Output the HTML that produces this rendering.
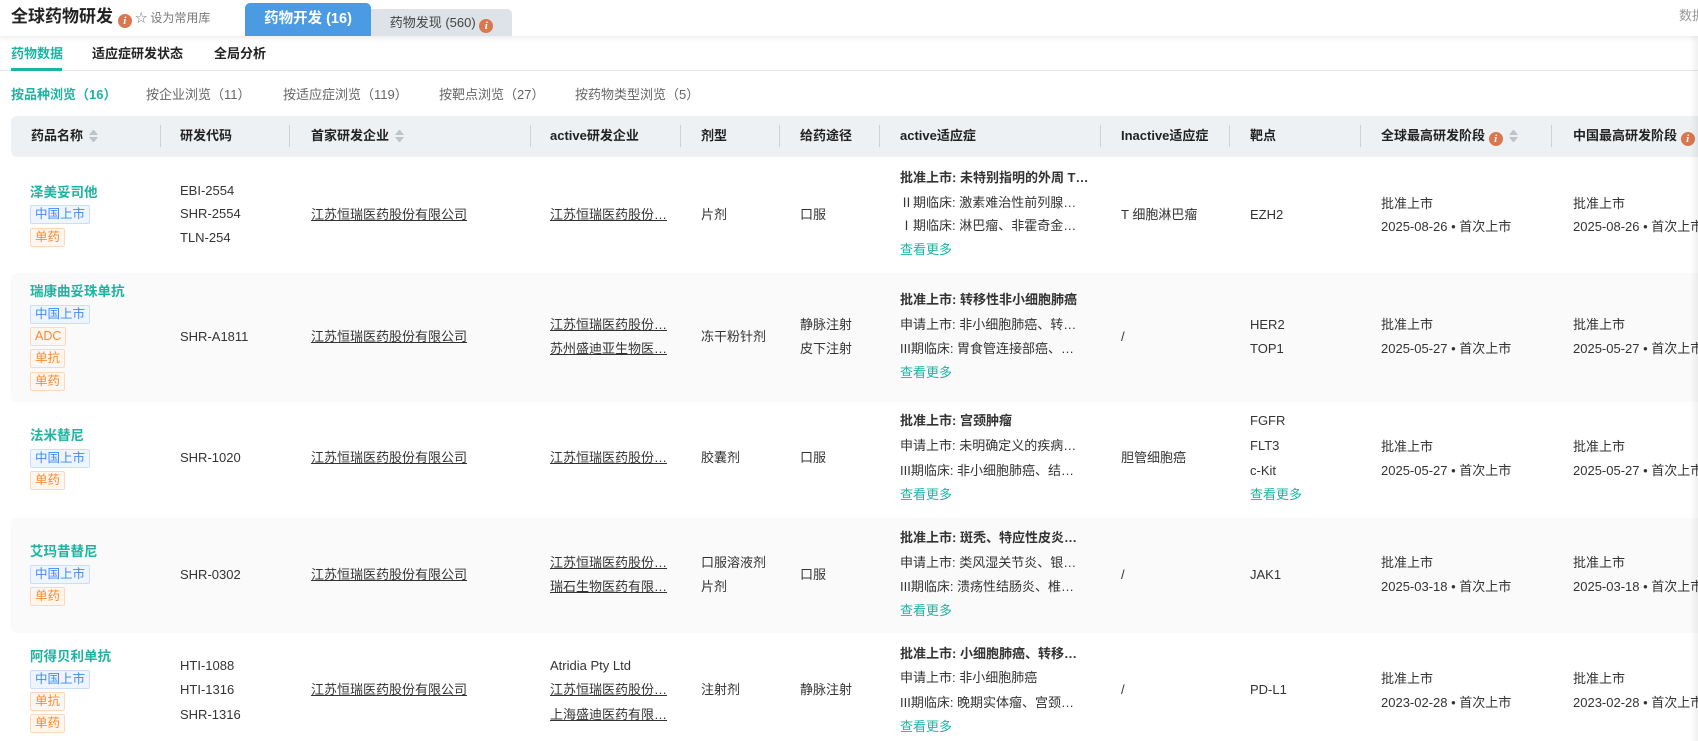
<!DOCTYPE html>
<html><head><meta charset="utf-8"><style>
*{margin:0;padding:0;box-sizing:border-box}
body{width:1698px;height:741px;overflow:hidden;background:#fff;position:relative;font-family:"Liberation Sans","Noto Sans CJK SC",sans-serif;font-size:13px;color:#333}
.a{position:absolute;white-space:nowrap;line-height:20px}
.b{font-weight:bold}
.n{color:#1fb3a2;font-weight:bold;font-size:13.5px}
.u{text-decoration:underline;color:#333}
.m{color:#1fb3a2}
.tag{position:absolute;height:19px;line-height:17px;font-size:12.5px;padding:0 4px;border:1px solid;border-radius:2px}
.cn{color:#3d8bf5;border-color:#c9defc;background:#eef5ff}
.or{color:#f98a32;border-color:#fcd9bd;background:#fff6ef}
.sep{position:absolute;top:125px;width:1px;height:22px;background:#ccd2d6}
.hd{position:absolute;top:126px;line-height:20px;font-weight:bold;color:#222;white-space:nowrap;font-size:13px}
.i{display:inline-block;width:14px;height:14px;border-radius:50%;background:#d9774f;color:#fff;font-size:11px;line-height:14px;text-align:center;font-weight:bold;font-style:italic;vertical-align:-2px;font-family:"Liberation Serif",serif}
.srt{display:inline-block;width:9px;vertical-align:-2px;margin-left:6px}
.srt:before{content:"";display:block;border:4px solid transparent;border-bottom:5px solid #bcc3c9;border-top:0;margin-bottom:2px}
.srt:after{content:"";display:block;border:4px solid transparent;border-top:5px solid #bcc3c9;border-bottom:0}
.rowbg{position:absolute;left:11px;width:1700px;background:#fafafa;border-radius:6px 0 0 6px}
</style></head><body>
<div style="position:absolute;left:0;top:0;width:1698px;height:36px;background:#fff;box-shadow:0 2px 5px rgba(0,0,0,.08)"></div>
<div class="a" style="left:11px;top:5px;font-size:17px;font-weight:bold;line-height:24px;color:#222">全球药物研发 <span class="i">i</span><span style="font-size:12px;color:#777;font-weight:normal"> ☆ 设为常用库</span></div>
<div style="position:absolute;left:245px;top:3px;width:126px;height:33px;background:#4a9be3;border-radius:5px 5px 0 0;color:#fff;font-weight:bold;font-size:14.5px;text-align:center;line-height:33px">药物开发 (16)</div>
<div style="position:absolute;left:371px;top:9px;width:141px;height:27px;background:#dde3e8;border-radius:0 5px 0 0;color:#444;font-size:13px;text-align:center;line-height:27px">药物发现 (560) <span class="i">i</span></div>
<div class="a" style="left:1679px;top:6px;color:#999;font-size:13px">数据</div>
<div class="a b" style="left:11px;top:44px;color:#1fb3a2">药物数据</div>
<div class="a b" style="left:92px;top:44px;color:#222">适应症研发状态</div>
<div class="a b" style="left:214px;top:44px;color:#222">全局分析</div>
<div style="position:absolute;left:0;top:70px;width:1698px;height:1px;background:#e4e7ea"></div>
<div style="position:absolute;left:11px;top:68px;width:51px;height:3px;background:#1fb3a2"></div>
<div class="a b" style="left:11px;top:85px;color:#1fb3a2">按品种浏览（16）</div>
<div class="a" style="left:146px;top:85px;color:#666">按企业浏览（11）</div>
<div class="a" style="left:283px;top:85px;color:#666">按适应症浏览（119）</div>
<div class="a" style="left:439px;top:85px;color:#666">按靶点浏览（27）</div>
<div class="a" style="left:575px;top:85px;color:#666">按药物类型浏览（5）</div>

<div style="position:absolute;left:11px;top:116px;width:1700px;height:41px;background:#eef1f3;border-radius:6px 0 0 6px"></div>
<div class="hd" style="left:31px">药品名称<span class="srt"></span></div>
<div class="sep" style="left:160px"></div><div class="hd" style="left:180px">研发代码</div>
<div class="sep" style="left:289px"></div><div class="hd" style="left:311px">首家研发企业<span class="srt"></span></div>
<div class="sep" style="left:530px"></div><div class="hd" style="left:550px">active研发企业</div>
<div class="sep" style="left:680px"></div><div class="hd" style="left:701px">剂型</div>
<div class="sep" style="left:779px"></div><div class="hd" style="left:800px">给药途径</div>
<div class="sep" style="left:879px"></div><div class="hd" style="left:900px">active适应症</div>
<div class="sep" style="left:1100px"></div><div class="hd" style="left:1121px">Inactive适应症</div>
<div class="sep" style="left:1229px"></div><div class="hd" style="left:1250px">靶点</div>
<div class="sep" style="left:1360px"></div><div class="hd" style="left:1381px">全球最高研发阶段 <span class="i">i</span><span class="srt"></span></div>
<div class="sep" style="left:1551px"></div><div class="hd" style="left:1573px">中国最高研发阶段 <span class="i">i</span></div>

<div class="rowbg" style="top:273px;height:129px"></div>
<div class="rowbg" style="top:518px;height:115px"></div>

<!-- row1 -->
<div class="a n" style="left:30px;top:183px">泽美妥司他</div>
<div class="tag cn" style="left:30px;top:205px">中国上市</div>
<div class="tag or" style="left:30px;top:228px">单药</div>
<div class="a" style="left:180px;top:181px">EBI-2554</div>
<div class="a" style="left:180px;top:204px">SHR-2554</div>
<div class="a" style="left:180px;top:228px">TLN-254</div>
<div class="a u" style="left:311px;top:205px">江苏恒瑞医药股份有限公司</div>
<div class="a u" style="left:550px;top:205px">江苏恒瑞医药股份…</div>
<div class="a" style="left:701px;top:205px">片剂</div>
<div class="a" style="left:800px;top:205px">口服</div>
<div class="a b" style="left:900px;top:168px">批准上市: 未特别指明的外周 T…</div>
<div class="a" style="left:900px;top:193px">Ⅱ期临床: 激素难治性前列腺…</div>
<div class="a" style="left:900px;top:216px">Ⅰ期临床: 淋巴瘤、非霍奇金…</div>
<div class="a m" style="left:900px;top:240px">查看更多</div>
<div class="a" style="left:1121px;top:205px">T 细胞淋巴瘤</div>
<div class="a" style="left:1250px;top:205px">EZH2</div>
<div class="a" style="left:1381px;top:194px">批准上市</div>
<div class="a" style="left:1381px;top:217px">2025-08-26 • 首次上市</div>
<div class="a" style="left:1573px;top:194px">批准上市</div>
<div class="a" style="left:1573px;top:217px">2025-08-26 • 首次上市</div>

<!-- row2 -->
<div class="a n" style="left:30px;top:282px">瑞康曲妥珠单抗</div>
<div class="tag cn" style="left:30px;top:305px">中国上市</div>
<div class="tag or" style="left:30px;top:327px">ADC</div>
<div class="tag or" style="left:30px;top:349px">单抗</div>
<div class="tag or" style="left:30px;top:372px">单药</div>
<div class="a" style="left:180px;top:327px">SHR-A1811</div>
<div class="a u" style="left:311px;top:327px">江苏恒瑞医药股份有限公司</div>
<div class="a u" style="left:550px;top:315px">江苏恒瑞医药股份…</div>
<div class="a u" style="left:550px;top:339px">苏州盛迪亚生物医…</div>
<div class="a" style="left:701px;top:327px">冻干粉针剂</div>
<div class="a" style="left:800px;top:315px">静脉注射</div>
<div class="a" style="left:800px;top:339px">皮下注射</div>
<div class="a b" style="left:900px;top:290px">批准上市: 转移性非小细胞肺癌</div>
<div class="a" style="left:900px;top:315px">申请上市: 非小细胞肺癌、转…</div>
<div class="a" style="left:900px;top:339px">III期临床: 胃食管连接部癌、…</div>
<div class="a m" style="left:900px;top:363px">查看更多</div>
<div class="a" style="left:1121px;top:327px">/</div>
<div class="a" style="left:1250px;top:315px">HER2</div>
<div class="a" style="left:1250px;top:339px">TOP1</div>
<div class="a" style="left:1381px;top:315px">批准上市</div>
<div class="a" style="left:1381px;top:339px">2025-05-27 • 首次上市</div>
<div class="a" style="left:1573px;top:315px">批准上市</div>
<div class="a" style="left:1573px;top:339px">2025-05-27 • 首次上市</div>

<!-- row3 -->
<div class="a n" style="left:30px;top:426px">法米替尼</div>
<div class="tag cn" style="left:30px;top:449px">中国上市</div>
<div class="tag or" style="left:30px;top:471px">单药</div>
<div class="a" style="left:180px;top:448px">SHR-1020</div>
<div class="a u" style="left:311px;top:448px">江苏恒瑞医药股份有限公司</div>
<div class="a u" style="left:550px;top:448px">江苏恒瑞医药股份…</div>
<div class="a" style="left:701px;top:448px">胶囊剂</div>
<div class="a" style="left:800px;top:448px">口服</div>
<div class="a b" style="left:900px;top:411px">批准上市: 宫颈肿瘤</div>
<div class="a" style="left:900px;top:436px">申请上市: 未明确定义的疾病…</div>
<div class="a" style="left:900px;top:461px">III期临床: 非小细胞肺癌、结…</div>
<div class="a m" style="left:900px;top:485px">查看更多</div>
<div class="a" style="left:1121px;top:448px">胆管细胞癌</div>
<div class="a" style="left:1250px;top:411px">FGFR</div>
<div class="a" style="left:1250px;top:436px">FLT3</div>
<div class="a" style="left:1250px;top:461px">c-Kit</div>
<div class="a m" style="left:1250px;top:485px">查看更多</div>
<div class="a" style="left:1381px;top:437px">批准上市</div>
<div class="a" style="left:1381px;top:461px">2025-05-27 • 首次上市</div>
<div class="a" style="left:1573px;top:437px">批准上市</div>
<div class="a" style="left:1573px;top:461px">2025-05-27 • 首次上市</div>

<!-- row4 -->
<div class="a n" style="left:30px;top:542px">艾玛昔替尼</div>
<div class="tag cn" style="left:30px;top:565px">中国上市</div>
<div class="tag or" style="left:30px;top:587px">单药</div>
<div class="a" style="left:180px;top:565px">SHR-0302</div>
<div class="a u" style="left:311px;top:565px">江苏恒瑞医药股份有限公司</div>
<div class="a u" style="left:550px;top:553px">江苏恒瑞医药股份…</div>
<div class="a u" style="left:550px;top:577px">瑞石生物医药有限…</div>
<div class="a" style="left:701px;top:553px">口服溶液剂</div>
<div class="a" style="left:701px;top:577px">片剂</div>
<div class="a" style="left:800px;top:565px">口服</div>
<div class="a b" style="left:900px;top:528px">批准上市: 斑秃、特应性皮炎…</div>
<div class="a" style="left:900px;top:553px">申请上市: 类风湿关节炎、银…</div>
<div class="a" style="left:900px;top:577px">III期临床: 溃疡性结肠炎、椎…</div>
<div class="a m" style="left:900px;top:601px">查看更多</div>
<div class="a" style="left:1121px;top:565px">/</div>
<div class="a" style="left:1250px;top:565px">JAK1</div>
<div class="a" style="left:1381px;top:553px">批准上市</div>
<div class="a" style="left:1381px;top:577px">2025-03-18 • 首次上市</div>
<div class="a" style="left:1573px;top:553px">批准上市</div>
<div class="a" style="left:1573px;top:577px">2025-03-18 • 首次上市</div>

<!-- row5 -->
<div class="a n" style="left:30px;top:647px">阿得贝利单抗</div>
<div class="tag cn" style="left:30px;top:670px">中国上市</div>
<div class="tag or" style="left:30px;top:692px">单抗</div>
<div class="tag or" style="left:30px;top:714px">单药</div>
<div class="a" style="left:180px;top:656px">HTI-1088</div>
<div class="a" style="left:180px;top:680px">HTI-1316</div>
<div class="a" style="left:180px;top:705px">SHR-1316</div>
<div class="a u" style="left:311px;top:680px">江苏恒瑞医药股份有限公司</div>
<div class="a" style="left:550px;top:656px">Atridia Pty Ltd</div>
<div class="a u" style="left:550px;top:680px">江苏恒瑞医药股份…</div>
<div class="a u" style="left:550px;top:705px">上海盛迪医药有限…</div>
<div class="a" style="left:701px;top:680px">注射剂</div>
<div class="a" style="left:800px;top:680px">静脉注射</div>
<div class="a b" style="left:900px;top:644px">批准上市: 小细胞肺癌、转移…</div>
<div class="a" style="left:900px;top:668px">申请上市: 非小细胞肺癌</div>
<div class="a" style="left:900px;top:693px">III期临床: 晚期实体瘤、宫颈…</div>
<div class="a m" style="left:900px;top:717px">查看更多</div>
<div class="a" style="left:1121px;top:680px">/</div>
<div class="a" style="left:1250px;top:680px">PD-L1</div>
<div class="a" style="left:1381px;top:669px">批准上市</div>
<div class="a" style="left:1381px;top:693px">2023-02-28 • 首次上市</div>
<div class="a" style="left:1573px;top:669px">批准上市</div>
<div class="a" style="left:1573px;top:693px">2023-02-28 • 首次上市</div>

<div style="position:absolute;left:1690px;top:36px;width:8px;height:705px;background:linear-gradient(to right,rgba(0,0,0,0),rgba(0,0,0,.06));"></div>
</body></html>
